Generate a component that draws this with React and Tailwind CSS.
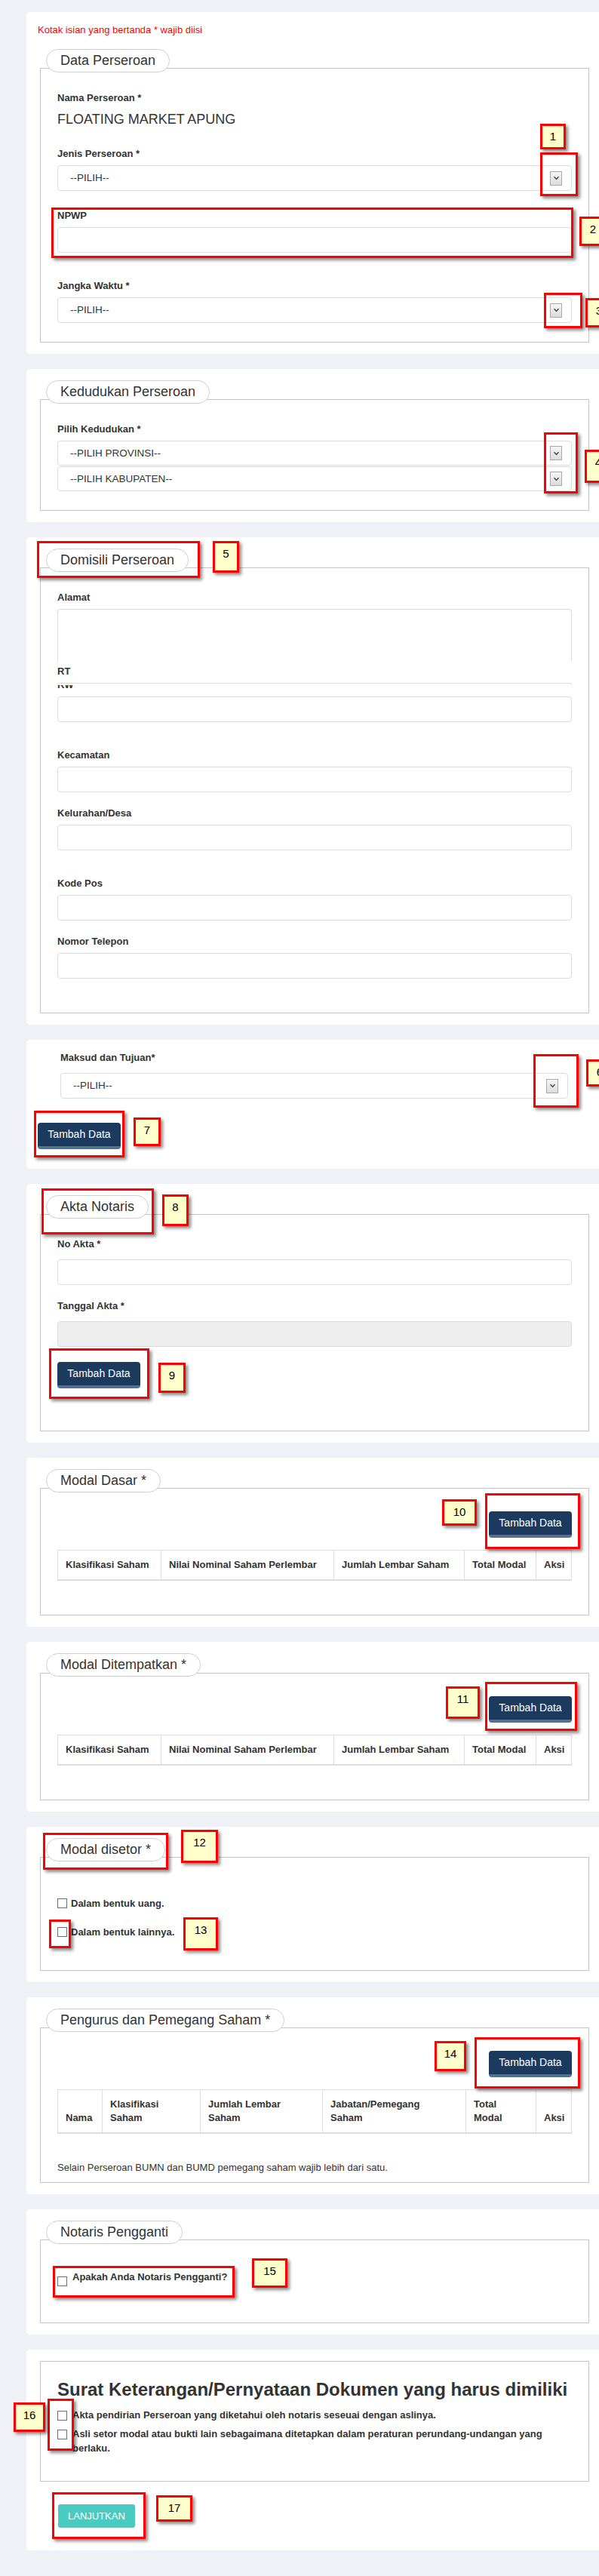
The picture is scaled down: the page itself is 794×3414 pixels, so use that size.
import React from "react";

function Label({ children, className = "" }) {
  return (
    <div className={`text-[13px] font-bold leading-[18px] text-[#333] ${className}`}>
      {children}
    </div>
  );
}

function Arrow() {
  return (
    <span className="flex h-[19px] w-[16px] items-center justify-center border border-[#a8a8a8] bg-linear-to-b from-[#f6f6f6] to-[#dcdcdc]">
      <svg width="9" height="6" viewBox="0 0 9 6">
        <path d="M1.5 1.2 L4.5 4.4 L7.5 1.2" fill="none" stroke="#4a4a4a" strokeWidth="1.5" />
      </svg>
    </span>
  );
}

function Select({ text, className = "", h = "h-[34px]", pl = "pl-[16px]" }) {
  return (
    <div
      className={`flex ${h} items-center justify-between rounded-[4px] border border-[#dcdcdc] bg-white ${pl} pr-[12px] ${className}`}
    >
      <span className="text-[13.5px] leading-[18px] text-[#333]">{text}</span>
      <Arrow />
    </div>
  );
}

function Input({ className = "", bg = "bg-white" }) {
  return <div className={`h-[34px] rounded-[4px] border border-[#dcdcdc] ${bg} ${className}`} />;
}

function Legend({ children, mb = "-mb-[6px]" }) {
  return (
    <div className={`relative z-10 flex pl-[8px] ${mb}`}>
      <div className="h-[31px] whitespace-nowrap rounded-full border border-[#cfcfcf] bg-white px-[18px] text-[18px] leading-[29px] text-[#333]">
        {children}
      </div>
    </div>
  );
}

function Card({ children, className = "" }) {
  return <section className={`w-[764px] rounded-[5px] bg-white px-[15px] ${className}`}>{children}</section>;
}

function Navy({ className = "" }) {
  return (
    <div
      className={`h-[35px] w-[110px] rounded-[4px] border-b-4 border-b-[#536f92] bg-[#1c3a5e] text-center text-[14px] leading-[31px] text-white ${className}`}
    >
      Tambah Data
    </div>
  );
}

function Box({ className = "" }) {
  return <span className={`inline-block h-[13px] w-[13px] shrink-0 border border-[#6e6e6e] bg-white ${className}`} />;
}

const th = "border border-[#dddddd] border-b-2 px-[10px] py-[10px] text-left align-bottom font-bold";

function ModalTable() {
  return (
    <table className="mt-[16px] w-full table-fixed border-collapse text-[13px] leading-[18px] text-[#333]">
      <colgroup>
        <col className="w-[137px]" />
        <col className="w-[229px]" />
        <col className="w-[173px]" />
        <col className="w-[95px]" />
        <col />
      </colgroup>
      <thead>
        <tr>
          <th className={th}>Klasifikasi Saham</th>
          <th className={th}>Nilai Nominal Saham Perlembar</th>
          <th className={th}>Jumlah Lembar Saham</th>
          <th className={th}>Total Modal</th>
          <th className={th}>Aksi</th>
        </tr>
      </thead>
    </table>
  );
}

const frame = "pointer-events-none absolute z-20 border-[3px] border-[#ff0000] shadow-[3px_3px_4px_rgba(0,0,0,0.45)]";
const num =
  "pointer-events-none absolute z-20 border-[3px] border-[#ff0000] bg-[#ffffcc] pt-[5px] text-center text-[15px] leading-[18px] text-black shadow-[3px_3px_4px_rgba(0,0,0,0.45)]";

export default function App() {
  return (
    <div className="relative w-[794px] overflow-hidden bg-[#eff1f6] pb-[34px] pt-[16px] font-['Liberation_Sans',Arial,sans-serif]">
      <div className="ml-[35px] flex flex-col gap-[20px]">
        {/* Card 1 */}
        <Card className="pb-[15px] pt-[15px]">
          <div className="text-[13px] leading-[18px] text-[#ff0000]">Kotak isian yang bertanda * wajib diisi</div>
          <div className="mx-[3px] mt-[16px]">
            <Legend>Data Perseroan</Legend>
            <div className="border border-[#c4c4c4] px-[22px] pb-[25px] pt-[30px]">
              <Label>Nama Perseroan *</Label>
              <div className="mt-[6px] text-[18px] leading-[26px] text-[#333]">FLOATING MARKET APUNG</div>
              <Label className="mt-[24px]">Jenis Perseroan *</Label>
              <Select className="mt-[6px]" text="--PILIH--" />
              <Label className="mt-[24px]">NPWP</Label>
              <Input className="mt-[6px]" />
              <Label className="mt-[35px]">Jangka Waktu *</Label>
              <Select className="mt-[6px]" text="--PILIH--" />
            </div>
          </div>
        </Card>

        {/* Card 2 */}
        <Card className="pb-[15px] pt-[15px]">
          <div className="mx-[3px]">
            <Legend>Kedudukan Perseroan</Legend>
            <div className="border border-[#c4c4c4] px-[22px] pb-[25px] pt-[30px]">
              <Label>Pilih Kedudukan *</Label>
              <Select className="mt-[6px]" h="h-[33px]" text="--PILIH PROVINSI--" />
              <Select className="mt-[1px]" h="h-[33px]" text="--PILIH KABUPATEN--" />
            </div>
          </div>
        </Card>

        {/* Card 3 */}
        <Card className="pb-[15px] pt-[15px]">
          <div className="mx-[3px]">
            <Legend>Domisili Perseroan</Legend>
            <div className="border border-[#c4c4c4] px-[22px] pb-[45px] pt-[30px]">
              <Label>Alamat</Label>
              <div className="mt-[6px] h-[70px] rounded-t-[4px] border-x border-t border-[#dcdcdc] bg-white" />
              <Label className="mt-[4px]">RT</Label>
              <div className="mt-[6px] h-[3px] rounded-t-[4px] border-x border-t border-[#dcdcdc]" />
              <div className="h-[5px] overflow-hidden">
                <Label className="-mt-[9px]">RW</Label>
              </div>
              <Input className="mt-[10px]" />
              <Label className="mt-[35px]">Kecamatan</Label>
              <Input className="mt-[6px]" />
              <Label className="mt-[19px]">Kelurahan/Desa</Label>
              <Input className="mt-[6px]" />
              <Label className="mt-[35px]">Kode Pos</Label>
              <Input className="mt-[6px]" />
              <Label className="mt-[19px]">Nomor Telepon</Label>
              <Input className="mt-[6px]" />
            </div>
          </div>
        </Card>

        {/* Card 4 */}
        <Card className="pb-[26px] pt-[15px]">
          <div className="pl-[30px] pr-[31px]">
            <Label>Maksud dan Tujuan*</Label>
            <Select className="mt-[11px]" pl="pl-[16px]" text="--PILIH--" />
          </div>
          <Navy className="mt-[32px]" />
        </Card>

        {/* Card 5 */}
        <Card className="pb-[15px] pt-[15px]">
          <div className="mx-[3px]">
            <Legend>Akta Notaris</Legend>
            <div className="border border-[#c4c4c4] px-[22px] pb-[56px] pt-[30px]">
              <Label>No Akta *</Label>
              <Input className="mt-[11px]" />
              <Label className="mt-[19px]">Tanggal Akta *</Label>
              <Input className="mt-[11px]" bg="bg-[#eeeeee]" />
              <Navy className="mt-[20px]" />
            </div>
          </div>
        </Card>

        {/* Card 6 */}
        <Card className="pb-[15px] pt-[15px]">
          <div className="mx-[3px]">
            <Legend>Modal Dasar *</Legend>
            <div className="border border-[#c4c4c4] px-[22px] pb-[45px] pt-[30px]">
              <div className="flex justify-end">
                <Navy />
              </div>
              <ModalTable />
            </div>
          </div>
        </Card>

        {/* Card 7 */}
        <Card className="pb-[15px] pt-[15px]">
          <div className="mx-[3px]">
            <Legend mb="-mb-[5px]">Modal Ditempatkan *</Legend>
            <div className="border border-[#c4c4c4] px-[22px] pb-[45px] pt-[30px]">
              <div className="flex justify-end">
                <Navy />
              </div>
              <ModalTable />
            </div>
          </div>
        </Card>

        {/* Card 8 */}
        <Card className="pb-[15px] pt-[15px]">
          <div className="mx-[3px]">
            <Legend>Modal disetor *</Legend>
            <div className="border border-[#c4c4c4] px-[22px] pb-[41px] pt-[52px]">
              <div className="flex gap-[5px] text-[13px] font-bold leading-[18px] text-[#333]">
                <Box className="mt-[2px]" />
                <span>Dalam bentuk uang.</span>
              </div>
              <div className="mt-[20px] flex gap-[5px] text-[13px] font-bold leading-[18px] text-[#333]">
                <Box className="mt-[2px]" />
                <span>Dalam bentuk lainnya.</span>
              </div>
            </div>
          </div>
        </Card>

        {/* Card 9 */}
        <Card className="pb-[15px] pt-[15px]">
          <div className="mx-[3px]">
            <Legend>Pengurus dan Pemegang Saham *</Legend>
            <div className="border border-[#c4c4c4] px-[22px] pb-[10px] pt-[30px]">
              <div className="flex justify-end">
                <Navy />
              </div>
              <table className="mt-[16px] w-full table-fixed border-collapse text-[13px] leading-[18px] text-[#333]">
                <colgroup>
                  <col className="w-[59px]" />
                  <col className="w-[130px]" />
                  <col className="w-[162px]" />
                  <col className="w-[190px]" />
                  <col className="w-[93px]" />
                  <col />
                </colgroup>
                <thead>
                  <tr>
                    <th className={th}>Nama</th>
                    <th className={th}>
                      Klasifikasi
                      <br />
                      Saham
                    </th>
                    <th className={th}>
                      Jumlah Lembar
                      <br />
                      Saham
                    </th>
                    <th className={th}>
                      Jabatan/Pemegang
                      <br />
                      Saham
                    </th>
                    <th className={th}>
                      Total
                      <br />
                      Modal
                    </th>
                    <th className={th}>Aksi</th>
                  </tr>
                </thead>
              </table>
              <div className="mt-[36px] text-[13px] leading-[18px] text-[#333]">
                Selain Perseroan BUMN dan BUMD pemegang saham wajib lebih dari satu.
              </div>
            </div>
          </div>
        </Card>

        {/* Card 10 */}
        <Card className="pb-[15px] pt-[15px]">
          <div className="mx-[3px]">
            <Legend>Notaris Pengganti</Legend>
            <div className="border border-[#c4c4c4] px-[22px] pb-[48px] pt-[40px]">
              <div className="flex gap-[7px] text-[13px] font-bold leading-[18px] text-[#333]">
                <Box className="mt-[8px]" />
                <span>Apakah Anda Notaris Pengganti?</span>
              </div>
            </div>
          </div>
        </Card>

        {/* Card 11 */}
        <Card className="pb-[30px] pt-[15px]">
          <div className="mx-[3px] border border-[#c4c4c4] px-[22px] pb-[34px] pt-[24px]">
            <div className="text-[24px] font-bold leading-[26px] text-[#333]">
              Surat Keterangan/Pernyataan Dokumen yang harus dimiliki
            </div>
            <div className="mt-[11px] flex gap-[7px] text-[13px] font-bold leading-[19px] text-[#333]">
              <Box className="mt-[4px]" />
              <span>Akta pendirian Perseroan yang diketahui oleh notaris seseuai dengan aslinya.</span>
            </div>
            <div className="mt-[6px] flex gap-[7px] text-[13px] font-bold leading-[19px] text-[#333]">
              <Box className="mt-[4px]" />
              <span>
                Asli setor modal atau bukti lain sebagaimana ditetapkan dalam peraturan perundang-undangan yang berlaku.
              </span>
            </div>
          </div>
          <div className="ml-[27px] mt-[30px] inline-block h-[31px] rounded-[3px] bg-[#48cbc0] px-[13px] text-[13px] leading-[31px] text-white">
            LANJUTKAN
          </div>
        </Card>
      </div>

      {/* Annotation frames */}
      <div className={`${frame} left-[716px] top-[202px] h-[58px] w-[50px]`} />
      <div className={`${frame} left-[68px] top-[275px] h-[67px] w-[692px]`} />
      <div className={`${frame} left-[721px] top-[388px] h-[47px] w-[51px]`} />
      <div className={`${frame} left-[721px] top-[573px] h-[81px] w-[45px]`} />
      <div className={`${frame} left-[49px] top-[717px] h-[49px] w-[216px]`} />
      <div className={`${frame} left-[707px] top-[1397px] h-[71px] w-[60px]`} />
      <div className={`${frame} left-[45px] top-[1472px] h-[62px] w-[120px]`} />
      <div className={`${frame} left-[55px] top-[1575px] h-[61px] w-[149px]`} />
      <div className={`${frame} left-[65px] top-[1787px] h-[67px] w-[133px]`} />
      <div className={`${frame} left-[643px] top-[1979px] h-[74px] w-[126px]`} />
      <div className={`${frame} left-[643px] top-[2229px] h-[65px] w-[122px]`} />
      <div className={`${frame} left-[57px] top-[2429px] h-[49px] w-[166px]`} />
      <div className={`${frame} left-[65px] top-[2544px] h-[38px] w-[29px]`} />
      <div className={`${frame} left-[629px] top-[2700px] h-[68px] w-[140px]`} />
      <div className={`${frame} left-[70px] top-[3003px] h-[42px] w-[241px]`} />
      <div className={`${frame} left-[63px] top-[3179px] h-[69px] w-[35px]`} />
      <div className={`${frame} left-[69px] top-[3303px] h-[62px] w-[124px]`} />

      {/* Annotation numbers */}
      <div className={`${num} left-[716px] top-[164px] h-[34px] w-[34px]`}>1</div>
      <div className={`${num} left-[768px] top-[287px] h-[39px] w-[36px]`}>2</div>
      <div className={`${num} left-[776px] top-[395px] h-[39px] w-[36px]`}>3</div>
      <div className={`${num} left-[775px] top-[596px] h-[44px] w-[36px]`}>4</div>
      <div className={`${num} left-[282px] top-[717px] h-[42px] w-[35px]`}>5</div>
      <div className={`${num} left-[777px] top-[1404px] h-[36px] w-[36px]`}>6</div>
      <div className={`${num} left-[177px] top-[1481px] h-[38px] w-[36px]`}>7</div>
      <div className={`${num} left-[215px] top-[1583px] h-[42px] w-[35px]`}>8</div>
      <div className={`${num} left-[210px] top-[1806px] h-[40px] w-[36px]`}>9</div>
      <div className={`${num} left-[586px] top-[1987px] h-[35px] w-[46px]`}>10</div>
      <div className={`${num} left-[591px] top-[2235px] h-[43px] w-[45px]`}>11</div>
      <div className={`${num} left-[240px] top-[2425px] h-[44px] w-[49px]`}>12</div>
      <div className={`${num} left-[243px] top-[2541px] h-[44px] w-[46px]`}>13</div>
      <div className={`${num} left-[576px] top-[2705px] h-[40px] w-[42px]`}>14</div>
      <div className={`${num} left-[334px] top-[2993px] h-[39px] w-[47px]`}>15</div>
      <div className={`${num} left-[18px] top-[3184px] h-[39px] w-[42px]`}>16</div>
      <div className={`${num} left-[207px] top-[3307px] h-[35px] w-[48px]`}>17</div>
    </div>
  );
}
